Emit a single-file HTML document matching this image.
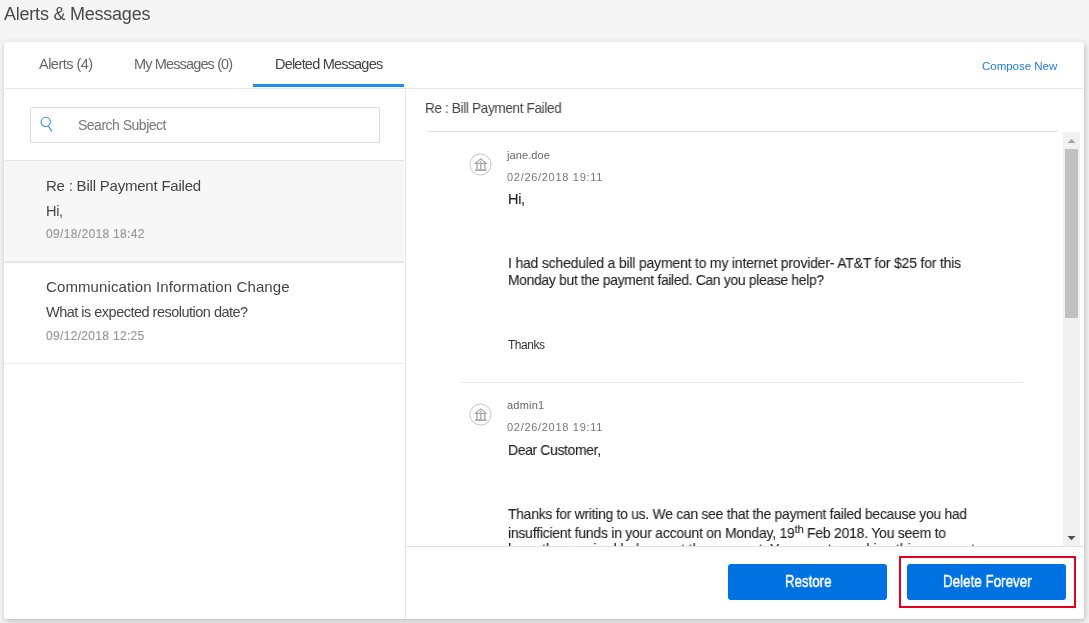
<!DOCTYPE html>
<html><head><meta charset="utf-8">
<style>
html,body{margin:0;padding:0;}
body{width:1089px;height:623px;background:#f5f5f5;position:relative;overflow:hidden;font-family:"Liberation Sans",sans-serif;}
.t{position:absolute;white-space:nowrap;will-change:transform;transform-origin:0 0;}
.t sup{font-size:11.5px;line-height:0;vertical-align:5px;}
.abs{position:absolute;}
#card{position:absolute;left:4px;top:42px;width:1080px;height:577px;background:#fff;border-radius:3px;box-shadow:1px 2px 6px rgba(0,0,0,0.25);}
</style></head><body>
<div id="card"></div>
<!-- tab border -->
<div class="abs" style="left:5px;top:88px;width:1078px;height:1px;background:#e4e4e4"></div>
<!-- active tab underline -->
<div class="abs" style="left:253px;top:84px;width:151px;height:3px;background:#1e8eee"></div>
<!-- left/right divider -->
<div class="abs" style="left:405px;top:89px;width:1px;height:530px;background:#e6e6e6"></div>
<!-- search box -->
<div class="abs" style="left:30px;top:107px;width:348px;height:34px;border:1px solid #dcdcdc;border-radius:2px;background:#fff"></div>
<svg class="abs" style="left:38px;top:114px" width="18" height="20" viewBox="0 0 18 20">
 <circle cx="7.7" cy="7.9" r="4.6" fill="none" stroke="#2f8be0" stroke-width="1.1"/>
 <line x1="10.4" y1="12.0" x2="13.7" y2="17.4" stroke="#2f8be0" stroke-width="1.1"/>
</svg>
<!-- list separators -->
<div class="abs" style="left:5px;top:160px;width:399px;height:1px;background:#e6e6e6"></div>
<div class="abs" style="left:5px;top:161px;width:399px;height:100px;background:#f7f7f7"></div>
<div class="abs" style="left:5px;top:261px;width:399px;height:1px;background:#ebebeb"></div>
<div class="abs" style="left:5px;top:262px;width:399px;height:1px;background:#e2e2e2"></div>
<div class="abs" style="left:5px;top:363px;width:399px;height:1px;background:#e8e9ec"></div>
<!-- right header line -->
<div class="abs" style="left:428px;top:131px;width:630px;height:1px;background:#e2e2e2"></div>
<!-- scrollbar -->
<div class="abs" style="left:1063px;top:132px;width:17px;height:414px;background:#f1f1f1"></div>
<div class="abs" style="left:1065px;top:149px;width:13px;height:169px;background:#c1c1c1"></div>
<svg class="abs" style="left:1063px;top:132px" width="17" height="17"><polygon points="4.5,11 12.5,11 8.5,6.9" fill="#a3a3a3"/></svg>
<svg class="abs" style="left:1063px;top:529px" width="17" height="17"><polygon points="4.5,7 12.5,7 8.5,11.3" fill="#505050"/></svg>
<!-- message avatars -->
<svg class="abs" style="left:468px;top:152px" width="25" height="25" viewBox="0 0 25 25">
 <circle cx="12.5" cy="12.5" r="10.6" fill="none" stroke="#c6c6c6" stroke-width="1"/>
 <path d="M7.2 11.4 L12.8 6.9 L18.4 11.4 Z" fill="none" stroke="#a6a6a6" stroke-width="1.1" stroke-linejoin="round"/>
 <circle cx="12.8" cy="9.6" r="0.85" fill="#a6a6a6"/>
 <rect x="8.3" y="12.0" width="1.5" height="5.4" fill="#b0b0b0"/>
 <rect x="12.05" y="12.0" width="1.5" height="5.4" fill="#b0b0b0"/>
 <rect x="16.0" y="12.0" width="1.5" height="5.4" fill="#b0b0b0"/>
 <rect x="7.0" y="17.3" width="11.6" height="1.7" fill="#a6a6a6"/>
</svg>
<svg class="abs" style="left:468px;top:402px" width="25" height="25" viewBox="0 0 25 25">
 <circle cx="12.5" cy="12.5" r="10.6" fill="none" stroke="#c6c6c6" stroke-width="1"/>
 <path d="M7.2 11.4 L12.8 6.9 L18.4 11.4 Z" fill="none" stroke="#a6a6a6" stroke-width="1.1" stroke-linejoin="round"/>
 <circle cx="12.8" cy="9.6" r="0.85" fill="#a6a6a6"/>
 <rect x="8.3" y="12.0" width="1.5" height="5.4" fill="#b0b0b0"/>
 <rect x="12.05" y="12.0" width="1.5" height="5.4" fill="#b0b0b0"/>
 <rect x="16.0" y="12.0" width="1.5" height="5.4" fill="#b0b0b0"/>
 <rect x="7.0" y="17.3" width="11.6" height="1.7" fill="#a6a6a6"/>
</svg>


<!-- message separator -->
<div class="abs" style="left:461px;top:382px;width:562px;height:1px;background:#e6e6e6"></div>
<!-- buttons -->
<div class="abs" style="left:728px;top:564px;width:159px;height:36px;background:#0071e0;border-radius:3px"></div>
<div class="abs" style="left:907px;top:564px;width:159px;height:36px;background:#0071e0;border-radius:3px"></div>
<div class="abs" style="left:899px;top:556px;width:173px;height:48px;border:2px solid #e4001b"></div>
<div id="title" class="t" style="left:3.60px;top:4.56px;font-size:18px;line-height:18px;color:#4a4a4a;font-weight:400;letter-spacing:-0.226px;">Alerts &amp; Messages</div>
<div id="tab1" class="t" style="left:39.20px;top:56.93px;font-size:14.5px;line-height:14.5px;color:#666;font-weight:400;letter-spacing:-0.519px;">Alerts (4)</div>
<div id="tab2" class="t" style="left:133.50px;top:56.93px;font-size:14.5px;line-height:14.5px;color:#666;font-weight:400;letter-spacing:-0.860px;">My Messages (0)</div>
<div id="tab3" class="t" style="left:274.50px;top:56.73px;font-size:14.5px;line-height:14.5px;color:#444;font-weight:400;letter-spacing:-0.796px;">Deleted Messages</div>
<div id="compose" class="t" style="left:981.50px;top:61.27px;font-size:11.5px;line-height:11.5px;color:#1f7fdc;font-weight:400;letter-spacing:-0.020px;">Compose New</div>
<div id="search" class="t" style="left:78.20px;top:117.85px;font-size:14px;line-height:14px;color:#777;font-weight:400;letter-spacing:-0.503px;">Search Subject</div>
<div id="l1t" class="t" style="left:46.00px;top:178.20px;font-size:15px;line-height:15px;color:#444;font-weight:400;letter-spacing:-0.212px;">Re : Bill Payment Failed</div>
<div id="l1b" class="t" style="left:46.00px;top:203.73px;font-size:14.5px;line-height:14.5px;color:#444;font-weight:400;letter-spacing:-0.287px;">Hi,</div>
<div id="l1d" class="t" style="left:45.50px;top:228.04px;font-size:12px;line-height:12px;color:#999;font-weight:400;letter-spacing:0.336px;-webkit-text-stroke:0.2px #999;">09/18/2018 18:42</div>
<div id="l2t" class="t" style="left:45.50px;top:278.80px;font-size:15px;line-height:15px;color:#444;font-weight:400;letter-spacing:0.112px;">Communication Information Change</div>
<div id="l2b" class="t" style="left:45.50px;top:304.73px;font-size:14.5px;line-height:14.5px;color:#444;font-weight:400;letter-spacing:-0.509px;">What is expected resolution date?</div>
<div id="l2d" class="t" style="left:45.50px;top:329.64px;font-size:12px;line-height:12px;color:#999;font-weight:400;letter-spacing:0.323px;-webkit-text-stroke:0.2px #999;">09/12/2018 12:25</div>
<div id="rh" class="t" style="left:424.90px;top:100.73px;font-size:14.5px;line-height:14.5px;color:#444;font-weight:400;letter-spacing:-0.403px;transform:scaleX(0.9397);">Re : Bill Payment Failed</div>
<div id="m1u" class="t" style="left:506.80px;top:149.69px;font-size:11px;line-height:11px;color:#666;font-weight:400;letter-spacing:0.094px;">jane.doe</div>
<div id="m1d" class="t" style="left:506.80px;top:171.69px;font-size:11px;line-height:11px;color:#777;font-weight:400;letter-spacing:0.703px;">02/26/2018 19:11</div>
<div id="m1h" class="t" style="left:507.50px;top:192.43px;font-size:14.5px;line-height:14.5px;color:#222;font-weight:400;letter-spacing:-0.287px;-webkit-text-stroke:0.1px #222;">Hi,</div>
<div id="m1p1" class="t" style="left:507.50px;top:256.43px;font-size:14.5px;line-height:14.5px;color:#222;font-weight:400;letter-spacing:-0.211px;transform:scaleX(0.9669);-webkit-text-stroke:0.1px #222;">I had scheduled a bill payment to my internet provider- AT&amp;T for $25 for this</div>
<div id="m1p2" class="t" style="left:507.50px;top:272.53px;font-size:14.5px;line-height:14.5px;color:#222;font-weight:400;letter-spacing:-0.312px;transform:scaleX(0.9549);-webkit-text-stroke:0.1px #222;">Monday but the payment failed. Can you please help?</div>
<div id="m1t" class="t" style="left:507.50px;top:339.04px;font-size:12px;line-height:12px;color:#333;font-weight:400;letter-spacing:-0.480px;">Thanks</div>
<div id="m2u" class="t" style="left:507.00px;top:399.79px;font-size:11px;line-height:11px;color:#666;font-weight:400;letter-spacing:0.200px;">admin1</div>
<div id="m2d" class="t" style="left:506.80px;top:421.89px;font-size:11px;line-height:11px;color:#777;font-weight:400;letter-spacing:0.703px;">02/26/2018 19:11</div>
<div id="m2h" class="t" style="left:507.50px;top:442.53px;font-size:14.5px;line-height:14.5px;color:#222;font-weight:400;letter-spacing:-0.330px;transform:scaleX(0.9573);-webkit-text-stroke:0.1px #222;">Dear Customer,</div>
<div id="m2p1" class="t" style="left:507.50px;top:506.53px;font-size:14.5px;line-height:14.5px;color:#222;font-weight:400;letter-spacing:-0.274px;transform:scaleX(0.9587);-webkit-text-stroke:0.1px #222;">Thanks for writing to us. We can see that the payment failed because you had</div>
<div id="m2p2" class="t" style="left:507.50px;top:525.63px;font-size:14.5px;line-height:14.5px;color:#222;font-weight:400;letter-spacing:-0.241px;transform:scaleX(0.9636);-webkit-text-stroke:0.1px #222;">insufficient funds in your account on Monday, 19<sup>th</sup> Feb 2018. You seem to</div>
<div id="m2p3" class="t" style="left:507.50px;top:542.03px;font-size:14.5px;line-height:14.5px;color:#222;font-weight:400;letter-spacing:-0.128px;transform:scaleX(0.9812);-webkit-text-stroke:0.1px #222;clip-path:inset(0 0 10.53px 0);">have the required balance at the moment. You may try making this payment</div>
<div id="b1" class="t" style="left:784.70px;top:574.06px;font-size:16px;line-height:16px;color:#fff;font-weight:400;transform:scaleX(0.8274);-webkit-text-stroke:0.45px #fff;">Restore</div>
<div id="b2" class="t" style="left:942.70px;top:573.96px;font-size:16px;line-height:16px;color:#fff;font-weight:400;transform:scaleX(0.8379);-webkit-text-stroke:0.45px #fff;">Delete Forever</div>
<div class="abs" style="left:406px;top:546px;width:678px;height:1px;background:#e2e2e2"></div>
</body></html>
